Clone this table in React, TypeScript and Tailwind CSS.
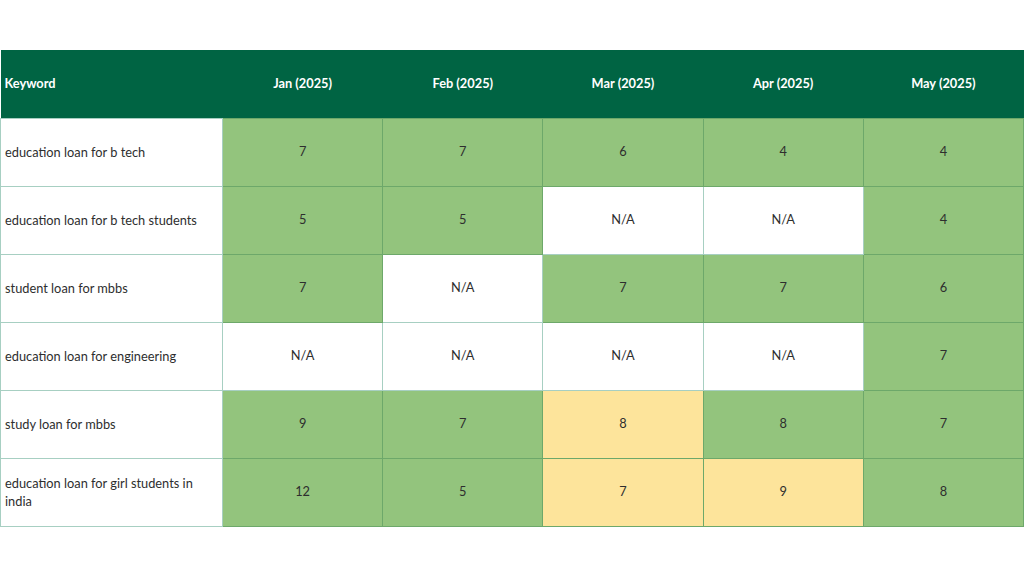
type Cell = number | "N/A";

const months = ["Jan (2025)", "Feb (2025)", "Mar (2025)", "Apr (2025)", "May (2025)"];

const rows: { kw: string; vals: Cell[]; yellow?: number[] }[] = [
  { kw: "education loan for b tech", vals: [7, 7, 6, 4, 4] },
  { kw: "education loan for b tech students", vals: [5, 5, "N/A", "N/A", 4] },
  { kw: "student loan for mbbs", vals: [7, "N/A", 7, 7, 6] },
  { kw: "education loan for engineering", vals: ["N/A", "N/A", "N/A", "N/A", 7] },
  { kw: "study loan for mbbs", vals: [9, 7, 8, 8, 7], yellow: [2] },
  { kw: "education loan for girl students in india", vals: [12, 5, 7, 9, 8], yellow: [2, 3] },
];

function cellClass(v: Cell, yellow: boolean) {
  if (v === "N/A") return "bg-white border-[#a7cfc2]";
  if (yellow) return "bg-[#fde49b] border-[#6da86a]";
  return "bg-[#93c47d] border-[#6da86a]";
}

export default function App() {
  return (
    <div className="w-[1024px] h-[576px] bg-white pt-[50px] text-[#2e2e2e] font-['Lato','Open_Sans',sans-serif]">
      <table className="w-full border-collapse table-fixed text-[12.8px]">
        <colgroup>
          <col className="w-[222px]" />
          <col />
          <col />
          <col />
          <col />
          <col />
        </colgroup>
        <thead>
          <tr className="h-[68px] bg-[#006443] text-white font-bold">
            <th className="text-left pl-[4px]">Keyword</th>
            {months.map((m) => (
              <th key={m} className="text-center">{m}</th>
            ))}
          </tr>
        </thead>
        <tbody>
          {rows.map((r) => (
            <tr key={r.kw} className="h-[68px]">
              <td className="border border-[#a7cfc2] bg-white pl-[4px] pr-4 leading-[18px]">{r.kw}</td>
              {r.vals.map((v, i) => (
                <td
                  key={i}
                  className={"border text-center " + cellClass(v, !!r.yellow && r.yellow.includes(i))}
                >
                  {v}
                </td>
              ))}
            </tr>
          ))}
        </tbody>
      </table>
    </div>
  );
}
